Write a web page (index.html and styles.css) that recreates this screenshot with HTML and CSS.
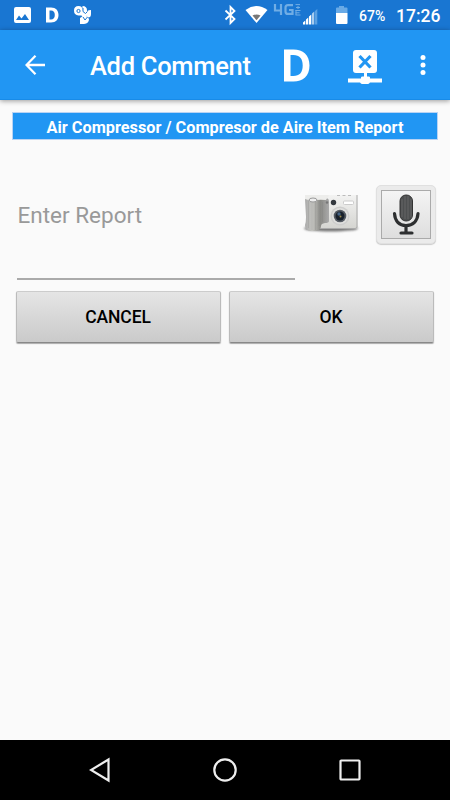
FILE: index.html
```html
<!DOCTYPE html>
<html lang="en">
<head>
<meta charset="utf-8">
<title>Add Comment</title>
<link rel="stylesheet" href="styles.css">
</head>
<body>
<div class="screen">
  <header class="status">
    <svg class="notifications" width="100" height="30" viewBox="0 0 100 30" fill="#fff">
      <path fill-rule="evenodd" d="M16 7h13q2 0 2 2v12q0 2-2 2H16q-2 0-2-2V9q0-2 2-2zM16 20h13l-4-6-3.500 4.500-2.500-3z"/>
      <path fill-rule="evenodd" d="M46 7.500h5c5 0 7.500 3 7.500 7.500s-2.500 7.500-7.500 7.500h-5zm3.500 3v9H51c2.500 0 3.800-1.600 3.800-4.500s-1.300-4.500-3.800-4.500z"/>
      <path d="M78.500 6q4 0 4 4v5.500h-4q-4.500-.5-4.500-5 0-4.500 4.500-4.500z"/>
      <path d="M82.500 6q4.500 0 4.500 4.500 0 3-3 4.500l-2-2z"/>
      <path d="M91 10v4q0 3.500-3 3.500l-3-3q1-4.500 6-4.500z"/>
      <path d="M80 18l3-2h3.500l2.500 3q0 4.500-5 5h-4z"/>
      <circle cx="84" cy="14.500" r="2.500"/>
      <g fill="none" stroke="#1976d2" stroke-width="1"><circle cx="78.500" cy="11" r="1.600"/><path d="M83 8v3.500l2.500 2 2-2M83 17l2 3 2.500-3"/></g>
    </svg>
    <svg class="signals" width="135" height="30" viewBox="215 0 135 30" fill="#fff">
      <path d="M225.500 10.500l9 8.500-4 4V7l4 4-9 8.500" fill="none" stroke="#fff" stroke-width="1.800"/>
      <path d="M245.500 10q11-8 22 0l-11 13z"/><path d="M252.500 15.500q4-2 8 0l-4 4.700z" fill="#777"/>
      <g fill="none" stroke="#70ade5"><path d="M275 4v6.500h7M281 4v11" stroke-width="2.200"/><path d="M293 5.200h-5q-2.500 0-2.500 2.500v3.700q0 2.500 2.500 2.500h4.500V10H289" stroke-width="2.200"/><path d="M295.500 4.600h4.500M296 7.500h4M298 6v3M295.500 10.500h5M295.500 12.800h4M295.500 15h5M296 10v5" stroke-width="1"/></g>
      <path d="M303 24.500v-2l2.300-2v4zM306 24.500v-5l2.300-2v7zM309 24.500v-8l2.300-2v10z"/><path d="M312 24.500v-11l2.300-2v13z" fill="#a9cdef"/><path d="M315 24.500V11l2.300-2v15.500z" fill="#5ba1e2"/>
      <path d="M336 13V8.500q0-1 1-1h2V6h5v1.500h2.500q1 0 1 1V13z" fill="#69aae6"/><path d="M336 13h11.500v10q0 1-1 1H337q-1 0-1-1z"/>
    </svg>
    <span class="percent">67%</span>
    <span class="clock">17:26</span>
  </header>
  <nav class="appbar">
    <svg class="back" width="20" height="20" viewBox="0 0 20 20" fill="none" stroke="#fff" stroke-width="2.300"><path d="M20 10H2M10.500.8L1.500 10l9 9.200"/></svg>
    <h1>Add Comment</h1>
    <span class="letter"><svg width="27" height="33" viewBox="0 0 27 33" fill="#fff"><path fill-rule="evenodd" d="M1 .5h9.500C20 .5 26.500 6 26.500 16.500S20 32.500 10.500 32.500H1zM7.500 6v21h3c6 0 9.200-3.500 9.200-10.500S16.500 6 10.500 6z"/></svg></span>
    <svg class="network" width="34" height="34" viewBox="0 0 34 34"><path d="M0 28.500h13v-1q0-1 1.500-1H16V23H8q-3 0-3-3V3q0-3 3-3h18q3 0 3 3v17q0 3-3 3h-7v3.500h1.500q1.500 0 1.500 1v1h12v4H22q-1 1.500-2.500 1.500h-5Q13 34 12 32.500H0z" fill="#fff"/><path d="M11.500 6l11 11.500m0-11.500l-11 11.500" stroke="#2196f3" stroke-width="3.200"/></svg>
    <svg class="more" width="6" height="20" viewBox="0 0 6 20" fill="#fff"><circle cx="3" cy="2.500" r="2.500"/><circle cx="3" cy="10" r="2.500"/><circle cx="3" cy="17.500" r="2.500"/></svg>
  </nav>
  <main>
    <h2>Air Compressor / Compresor de Aire Item Report</h2>
    <div class="entry">
      <div class="field">Enter Report</div>
      <svg class="camera" width="60" height="48" viewBox="300 190 60 48">
        <defs>
          <linearGradient id="grip"><stop stop-color="#aaa"/><stop offset=".3" stop-color="#c5c5c1"/><stop offset=".65" stop-color="#8b8b87"/><stop offset="1" stop-color="#aaa"/></linearGradient>
          <linearGradient id="case" x2="0" y2="1"><stop stop-color="#f3f3f2"/><stop offset="1" stop-color="#d4d4d0"/></linearGradient>
          <filter id="soft" x="-20%" y="-100%" width="140%" height="300%"><feGaussianBlur stdDeviation="1.200"/></filter>
        </defs>
        <ellipse cx="331" cy="228.500" rx="27" ry="3" fill="#777" filter="url(#soft)"/>
        <path d="M305 195H357.500v32q0 2-2 2h-40z" fill="url(#case)"/><path d="M357 195v32q0 1.500-2 1.500H318" fill="none" stroke="#aaa"/>
        <path d="M305 199q0-2 5-2h10q9 0 9 4v20q0 2-4 2-4 .5-4 3 0 5-7 5h-4q-5-1-5-6 1-3 1-8z" fill="url(#grip)"/>
        <path d="M308.500 201v27M312 202v28M315.500 202v28M319 201v25M322.500 202v20" stroke="#777" stroke-opacity=".2"/>
        <path d="M305 199V195h24l-3 5q-8-1-14 1z" fill="#ededeb"/>
        <ellipse cx="313" cy="200" rx="4" ry="2" fill="#eee" stroke="#999"/>
        <circle cx="327" cy="202.500" r="1.200" fill="#777"/><circle cx="333.500" cy="202.500" r="2.700" fill="#33383e"/>
        <rect x="343.500" y="201" width="10" height="3.500" rx="1" fill="#fff" stroke="#ccc"/>
        <path d="M337 195.500h3m2.500 0h3m2.500 0h3" stroke="#bbb" stroke-width="1.200"/>
        <circle cx="340" cy="216" r="9.500" fill="#cececd"/><circle cx="340" cy="216" r="8" fill="#e0e0de"/>
        <circle cx="340" cy="216" r="6.300" fill="#555b63"/><circle cx="340" cy="216" r="4.500" fill="#18202b"/><circle cx="339" cy="214" r="1.700" fill="#466486"/><circle cx="340.500" cy="216.500" r="1" fill="#9a8a4d"/>
      </svg>
      <div class="voice"><div class="voice-face">
        <svg width="30" height="44" viewBox="391 192 30 44"><rect x="400" y="194" width="12.500" height="26" rx="6" fill="#4d4f50" stroke="#333"/><path d="M402 198v18M405 195v23M408 195v23M411 198v18" stroke="#777" stroke-width=".6"/><path d="M394.500 212.500c.5 8 5 12 11.500 12s11.500-4 12-12M406 225v6M401 232h11" fill="none" stroke="#2d2f30" stroke-width="3.200" stroke-linecap="round"/></svg>
      </div></div>
    </div>
    <div class="actions"><button>CANCEL</button><button>OK</button></div>
  </main>
  <footer class="navbar">
    <svg width="22" height="26" viewBox="0 0 22 26"><path d="M19.500 2.500v21L2 13z"/></svg>
    <svg width="26" height="26" viewBox="0 0 26 26"><circle cx="13" cy="13" r="10.700"/></svg>
    <svg width="22" height="22" viewBox="0 0 22 22"><rect x="1.500" y="1.500" width="19" height="19" rx=".7"/></svg>
  </footer>
</div>
</body>
</html>
```
FILE: styles.css
```css
* { box-sizing: border-box; }
body { margin: 0; font-family: Roboto, "Liberation Sans", sans-serif; }
svg { display: block; flex: none; }
.screen { width: 450px; height: 800px; display: flex; flex-direction: column; background: #fafafa; overflow: hidden; }
.status { height: 30px; flex: none; display: flex; align-items: center; background: #1976d2; color: #fff; white-space: nowrap; }
.signals { margin-left: 115px; }
.percent { margin-left: 9px; width: 37px; font-size: 14px; font-weight: 500; padding-top: 2px; letter-spacing: .1px; }
.clock { font-size: 17.500px; font-weight: 500; padding-top: 1px; }
.appbar { height: 70px; flex: none; display: flex; align-items: center; padding: 0 0 0 25px; background: #2196f3; border-bottom: 1px solid #188be8; box-shadow: 0 1px 5px rgba(0, 0, 0, .4); color: #fff; }
h1 { margin: 3px 0 0 45px; width: 193px; font-size: 25.500px; line-height: 32px; font-weight: 500; letter-spacing: -.3px; white-space: nowrap; }
.letter { margin-top: 1px; }
.network { margin: 5px 0 0 38px; }
.more { margin-left: 38px; }
main { flex: 1; padding: 12px; }
h2 { margin: 0; height: 28px; width: 426px; border: 1px solid #b9d3f4; background: #2196f3; color: #fff; font-size: 16.300px; line-height: 29px; font-weight: 700; text-align: center; white-space: nowrap; }
.entry { display: flex; align-items: flex-start; height: 151px; padding: 45px 0 0 5px; }
.field { width: 278px; height: 95px; border-bottom: 2px solid #aaa; color: #999; font-size: 22.500px; line-height: 60px; text-indent: .5px; }
.camera { margin: 5px 0 0 5px; }
.voice { width: 60px; height: 59px; margin-left: 16px; padding: 4px; border: 1px solid #e0e0e0; border-radius: 5px; background: #ebebeb; box-shadow: 0 1px 1px #ccc; }
.voice-face { height: 100%; display: grid; place-items: center; border: 1px solid #aaa; background: linear-gradient(#f4f4f4, #dedede); }
.actions { display: flex; gap: 8px; padding-left: 4px; }
button { width: 205px; height: 52px; border: 1px solid #bbb; border-top-color: #ccc; border-bottom-color: #888; border-radius: 2px; background: linear-gradient(#e5e5e5, #cacaca); box-shadow: 0 1px 1px #aaa; color: #000; font: 500 17.500px Roboto, sans-serif; letter-spacing: -.1px; padding: 1px 7px 1px 6px; }
.navbar { height: 60px; flex: none; display: flex; align-items: center; justify-content: space-between; padding: 0 89px; background: #000; fill: none; stroke: #eee; stroke-width: 2.200px; }
```
